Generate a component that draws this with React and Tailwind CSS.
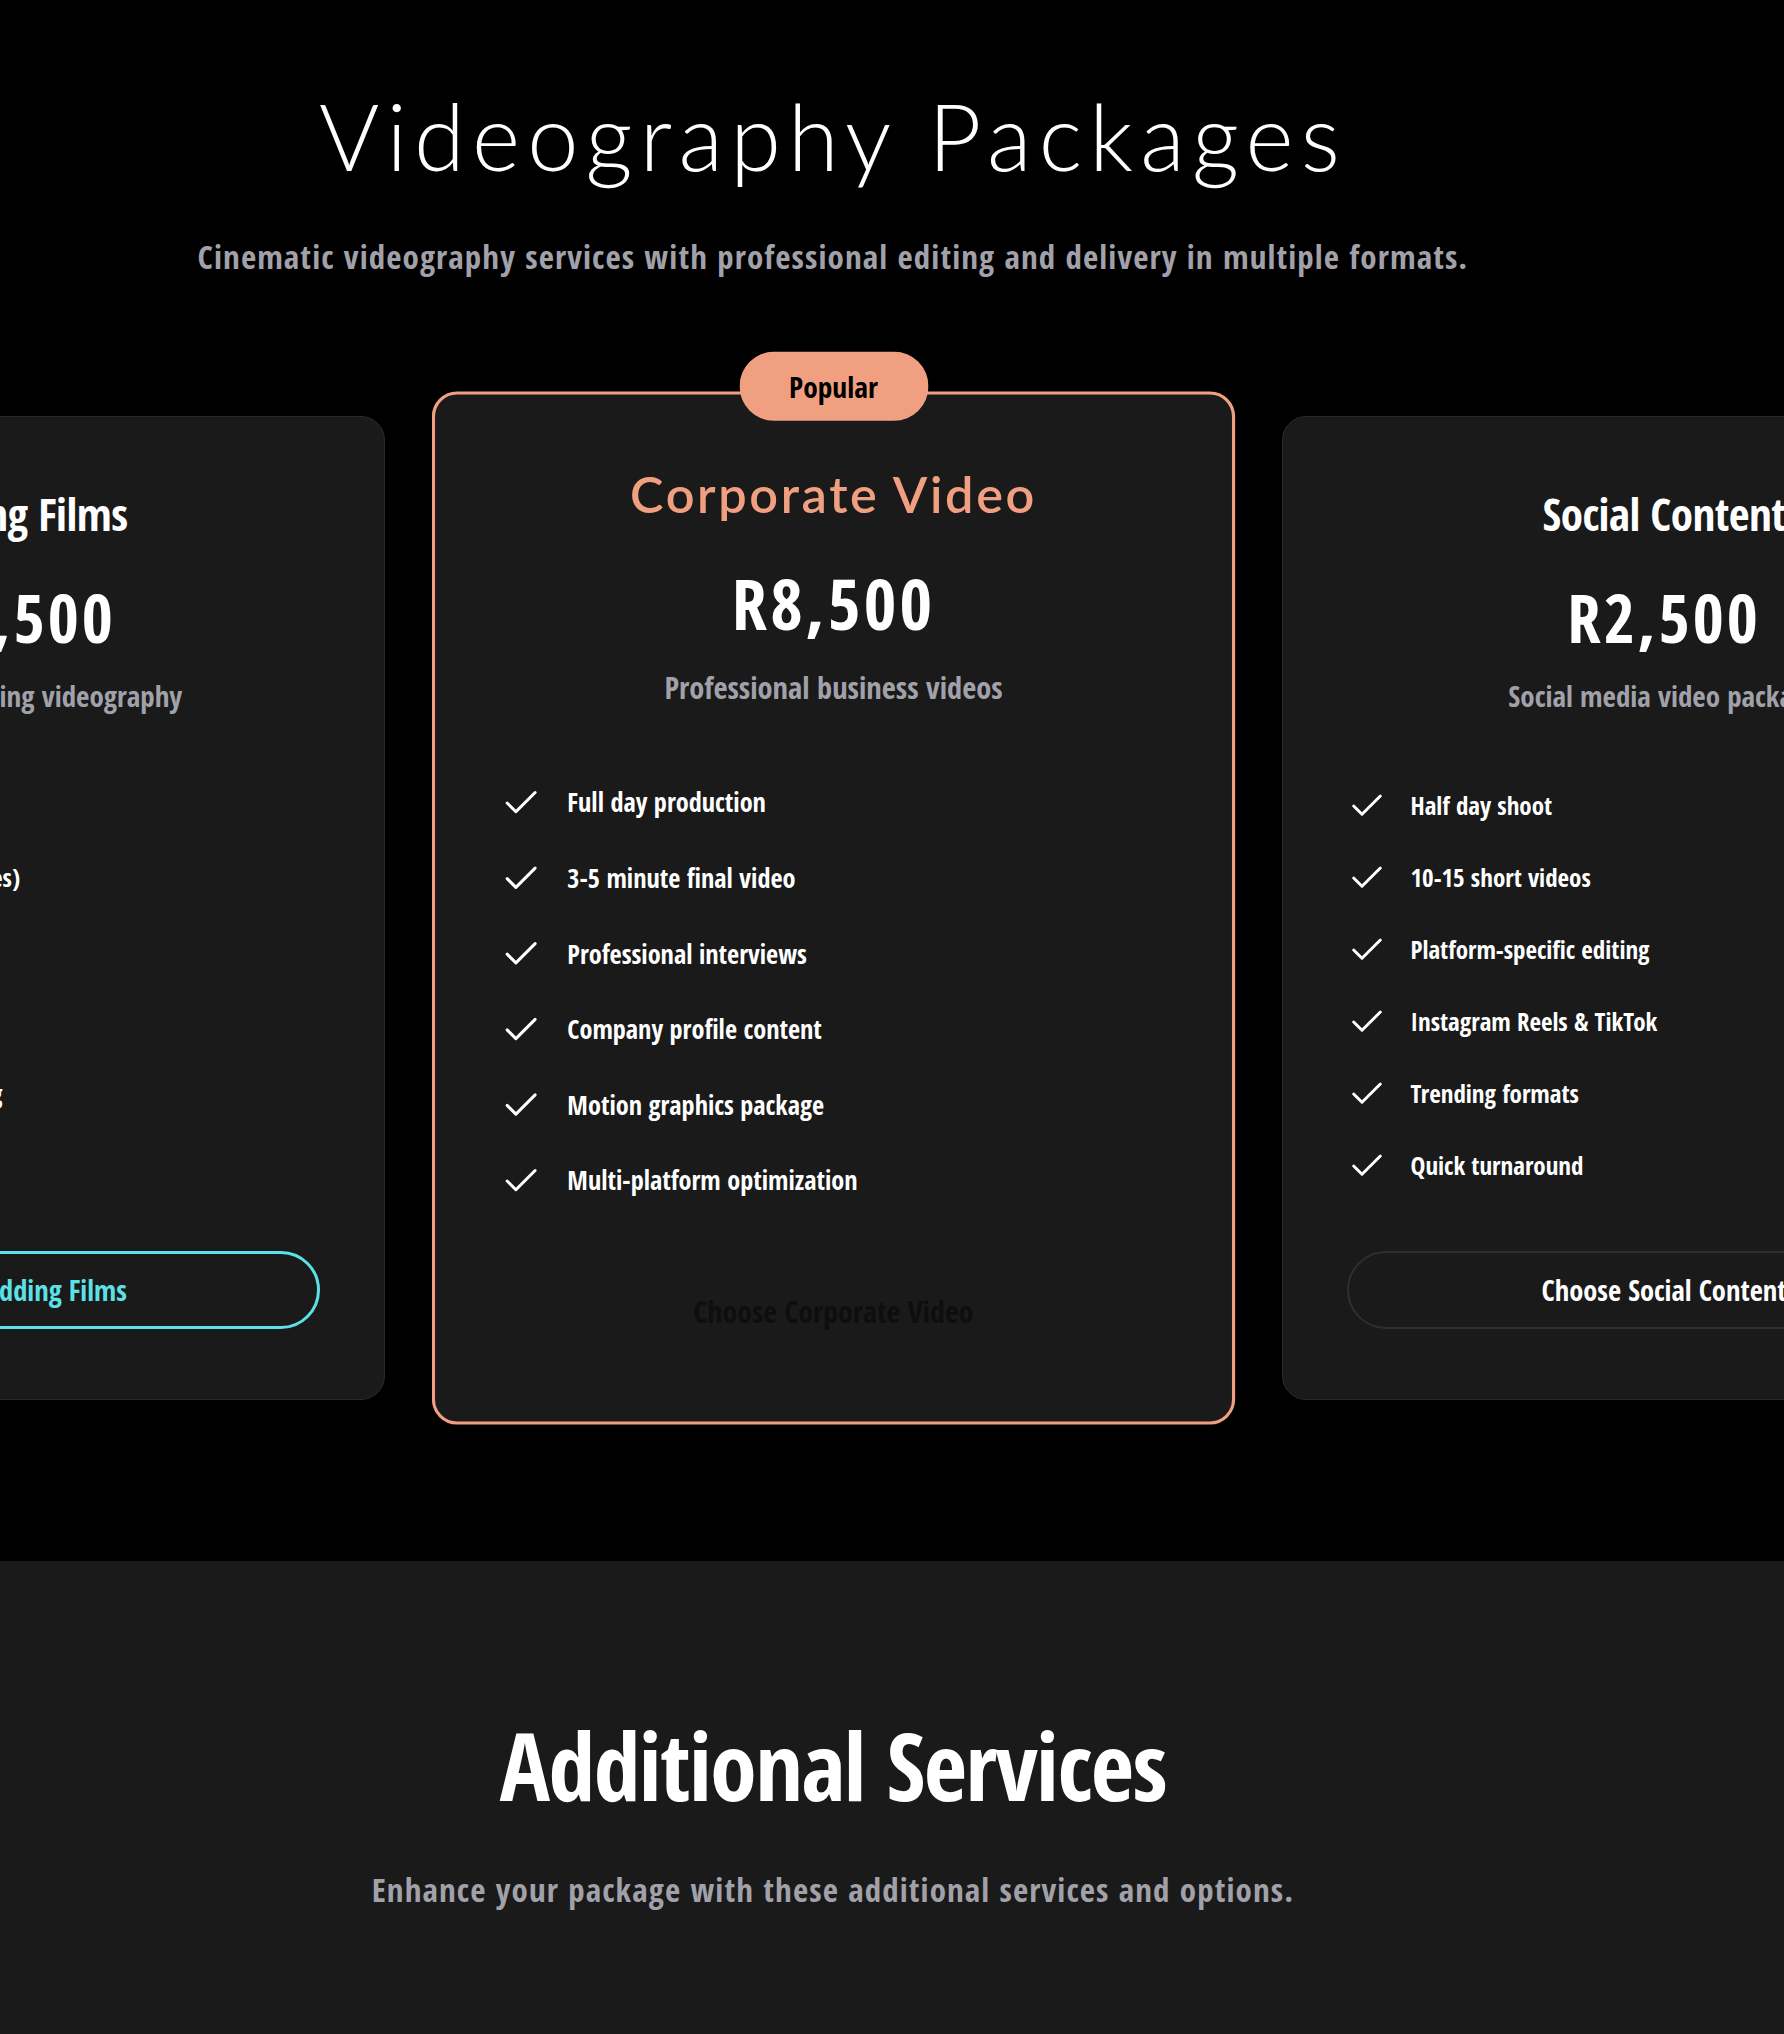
import React from 'react';

const packages = [
    {
        name: 'Wedding Films',
        price: 'R15,500',
        description: 'Complete wedding videography',
        features: [
            'Full day coverage',
            'Highlight reel (3-5 minutes)',
            'Full ceremony film',
            'Drone footage',
            'Professional color grading',
            'Online delivery'
        ],
        accent: 'cyan'
    },
    {
        name: 'Corporate Video',
        price: 'R8,500',
        description: 'Professional business videos',
        features: [
            'Full day production',
            '3-5 minute final video',
            'Professional interviews',
            'Company profile content',
            'Motion graphics package',
            'Multi-platform optimization'
        ],
        popular: true
    },
    {
        name: 'Social Content',
        price: 'R2,500',
        description: 'Social media video package',
        features: [
            'Half day shoot',
            '10-15 short videos',
            'Platform-specific editing',
            'Instagram Reels & TikTok',
            'Trending formats',
            'Quick turnaround'
        ]
    }
];

const CheckIcon = () => (
    <svg width="40" height="40" viewBox="0 0 24 24" fill="none" stroke="currentColor" strokeWidth="1.75" strokeLinecap="round" strokeLinejoin="round" className="shrink-0 text-white">
        <path d="M20 6 9 17l-5-5" />
    </svg>
);

const PackageCard = ({ pkg }) => {
    const popular = pkg.popular;

    return (
        <div
            className={`relative w-[765px] shrink-0 rounded-3xl bg-[#1a1a1a] ${
                popular ? 'scale-105 border-[3px] border-[#f0a081] px-[62px] pt-[62px] pb-[66px]' : 'border border-[#2a2a2a] px-16 pt-16 pb-[70px]'
            }`}
        >
            {popular && (
                <div className="absolute left-1/2 -top-[41px] -translate-x-1/2 flex h-[66px] w-[180px] items-center justify-center rounded-full bg-[#f0a081] text-[28px] font-bold text-black">
                    Popular
                </div>
            )}

            <h3
                className={`text-center leading-[66px] ${
                    popular
                        ? "font-['Lato',sans-serif] text-[48px] font-semibold tracking-[2.5px] text-[#f0a081] [font-stretch:normal]"
                        : 'text-[45px] font-bold tracking-[-0.5px] text-white'
                }`}
            >
                {pkg.name}
            </h3>
            <div className="mt-[30px] text-center text-[67px] font-black leading-[80px] tracking-[3px] text-white">{pkg.price}</div>
            <p className={`${popular ? 'mt-[21px]' : 'mt-[19px]'} text-center text-[29px] font-medium leading-[40px] text-[#a1a1aa]`}>
                {pkg.description}
            </p>

            <ul className="mt-[70px] flex flex-col gap-8">
                {pkg.features.map((feature) => (
                    <li key={feature} className="flex h-10 items-center gap-6">
                        <CheckIcon />
                        <span className="whitespace-nowrap text-[25px] font-semibold text-white">{feature}</span>
                    </li>
                ))}
            </ul>

            <button
                className={`mt-[65px] flex h-[78px] w-full items-center justify-center rounded-full text-[28.5px] font-bold ${
                    popular
                        ? 'border-2 border-transparent text-[#0e0e0e]'
                        : pkg.accent === 'cyan'
                            ? 'border-[3px] border-[#5ce1e6] text-[#5ce1e6]'
                            : 'border-2 border-[#2e2e33] text-white'
                }`}
            >
                Choose {pkg.name}
            </button>
        </div>
    );
};

const App = () => {
    return (
        <div className="min-h-screen bg-[#1a1a1a] font-['Noto_Sans_Condensed','Open_Sans_Condensed','Noto_Sans',sans-serif] [font-stretch:condensed]">
            <section className="overflow-hidden bg-black pt-[90px] pb-[161px]">
                <div className="pr-[118px]">
                    <h1 className="text-center font-['Lato',sans-serif] text-[92px] font-light leading-none tracking-[7.2px] text-white [font-stretch:normal]">
                        Videography Packages
                    </h1>
                    <p className="mt-[52px] text-center text-[33px] font-medium leading-[45px] tracking-[1.1px] text-[#a1a1aa]">
                        Cinematic videography services with professional editing and delivery in multiple formats.
                    </p>

                    <div className="mt-[137px] flex items-start justify-center gap-[66px]">
                        {packages.map((pkg) => (
                            <PackageCard key={pkg.name} pkg={pkg} />
                        ))}
                    </div>
                </div>
            </section>

            <section className="bg-[#1a1a1a] pt-[157px] pb-[134px]">
                <div className="pr-[118px]">
                    <h2 className="text-center text-[94px] font-extrabold leading-none tracking-[-1.5px] text-white">
                        Additional Services
                    </h2>
                    <p className="mt-[55px] text-center text-[33px] font-medium leading-[45px] tracking-[1.1px] text-[#a1a1aa]">
                        Enhance your package with these additional services and options.
                    </p>
                </div>
            </section>
        </div>
    );
};

export default App;
